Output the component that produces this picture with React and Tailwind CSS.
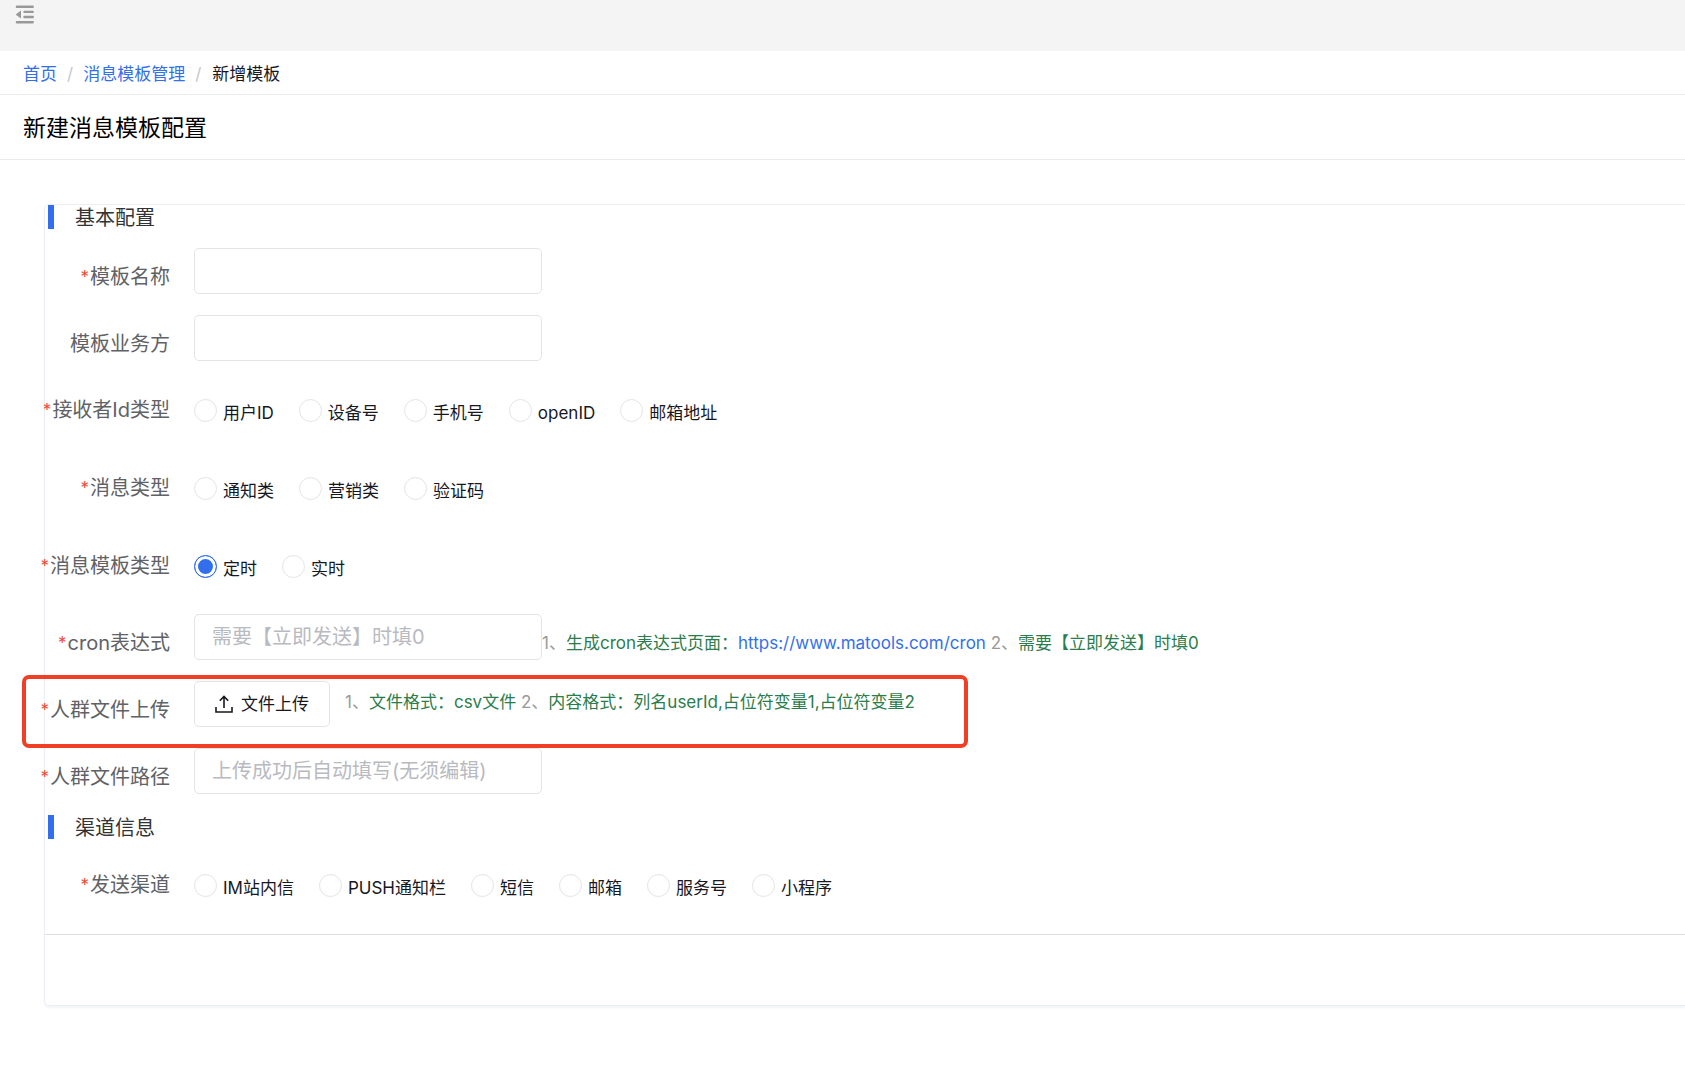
import { useState } from 'react';

const idTypes = ['用户ID', '设备号', '手机号', 'openID', '邮箱地址'];
const msgTypes = ['通知类', '营销类', '验证码'];
const templateTypes = ['定时', '实时'];
const channels = ['IM站内信', 'PUSH通知栏', '短信', '邮箱', '服务号', '小程序'];

function FoldIcon() {
  return (
    <svg width="20" height="20" viewBox="0 0 20 20" fill="#999999">
      <rect x="0.8" y="0.6" width="18" height="2.4" rx="0.8" />
      <rect x="8.4" y="5.7" width="10.4" height="2.4" rx="0.8" />
      <rect x="8.4" y="10.8" width="10.4" height="2.4" rx="0.8" />
      <rect x="0.8" y="16" width="18" height="2.4" rx="0.8" />
      <path d="M0.6 9.5 6 5.6v7.8z" />
    </svg>
  );
}

function UploadIcon() {
  return (
    <svg
      width="18"
      height="18"
      viewBox="0 0 18 18"
      fill="none"
      stroke="currentColor"
      strokeWidth="1.6"
    >
      <path d="M9 13V1.5M4.8 5.7 9 1.5l4.2 4.2M1 12v5h16v-5" />
    </svg>
  );
}

function SectionTitle({ children }) {
  return (
    <div className="ml-[3px] flex h-6 items-center gap-[21px]">
      <span className="h-full w-1.5 bg-[#326fed]" />
      <h2 className="pt-0.5 text-[20px] leading-6 text-[#333333]">{children}</h2>
    </div>
  );
}

function Label({ htmlFor, id, required, children }) {
  const Tag = htmlFor ? 'label' : 'span';
  return (
    <Tag
      htmlFor={htmlFor}
      id={id}
      className="mr-6 flex w-[125px] shrink-0 justify-end whitespace-nowrap text-[20px] leading-6 text-[#606266]"
    >
      {required && <span className="mr-px text-[17px] text-[#f5483b]">*</span>}
      {children}
    </Tag>
  );
}

function TextRow({ id, label, required, placeholder, children }) {
  return (
    <div className="mb-[21px] flex h-[46px] items-center">
      <div className="pt-3">
        <Label htmlFor={id} required={required}>
          {label}
        </Label>
      </div>
      <input
        id={id}
        type="text"
        placeholder={placeholder}
        className="h-full w-[348px] shrink-0 rounded-[5px] border border-[#e4e4e6] bg-white px-[17px] text-[20px] text-[#333333] outline-none placeholder:text-[#b8bac0]"
      />
      {children}
    </div>
  );
}

function RadioRow({ name, label, options, initial }) {
  const [value, setValue] = useState(initial);
  return (
    <div className="flex h-[78px] items-center" role="radiogroup" aria-labelledby={name}>
      <Label id={name} required>
        {label}
      </Label>
      <div className="flex gap-[25px]">
        {options.map((option) => (
          <label
            key={option}
            className="flex cursor-pointer items-center gap-1.5 whitespace-nowrap text-[17px] leading-6 text-[#17181f]"
          >
            <input
              type="radio"
              name={name}
              value={option}
              checked={value === option}
              onChange={() => setValue(option)}
              className="m-0 size-[23px] shrink-0 appearance-none rounded-full border border-[#e4e4e6] bg-white checked:border-[#326fed] checked:bg-[#326fed] checked:shadow-[inset_0_0_0_3px_white]"
            />
            <span className="-mb-1 pt-0.5">{option}</span>
          </label>
        ))}
      </div>
    </div>
  );
}

function Hint({ children }) {
  return (
    <p className="whitespace-nowrap text-[17px] leading-6 text-[#2b7d4b]">{children}</p>
  );
}

function Num({ children }) {
  return <span className="text-[#999999]">{children}</span>;
}

export default function App() {
  return (
    <div className="min-h-screen overflow-hidden bg-white font-[Inter,'Noto_Sans_CJK_SC',sans-serif]">
      <header className="h-[51px] bg-[#f4f4f4] px-[15px] pt-[5px]">
        <button type="button" aria-label="收起菜单" className="block">
          <FoldIcon />
        </button>
      </header>

      <nav className="flex h-11 items-center border-b border-[#e8eaec] px-[23px] pt-0.5 text-[17px] leading-6">
        <a href="#home" className="text-[#326fed]">
          首页
        </a>
        <span className="px-2.5 text-[#c5c8ce]">/</span>
        <a href="#templates" className="text-[#326fed]">
          消息模板管理
        </a>
        <span className="px-2.5 text-[#c5c8ce]">/</span>
        <span className="pl-px text-[#17181f]">新增模板</span>
      </nav>

      <div className="flex h-[65px] items-center border-b border-[#e8eaec] px-[23px] pt-0.5">
        <h1 className="text-[23px] leading-8 text-black">新建消息模板配置</h1>
      </div>

      <main className="pl-11 pt-11">
        <form
          onSubmit={(e) => e.preventDefault()}
          className="rounded-l-[5px] border-y border-l border-[#ebeef5] shadow-[0_2px_2px_#f3f4f8]"
        >
          <SectionTitle>基本配置</SectionTitle>

          <div className="pt-[19px]">
            <TextRow id="name" label="模板名称" required />
            <TextRow id="owner" label="模板业务方" />
          </div>

          <div className="-mt-[11px] mb-[9px]">
            <RadioRow name="idType" label="接收者Id类型" options={idTypes} />
            <RadioRow name="msgType" label="消息类型" options={msgTypes} />
            <RadioRow
              name="templateType"
              label="消息模板类型"
              options={templateTypes}
              initial="定时"
            />
          </div>

          <TextRow id="cron" label="cron表达式" required placeholder="需要【立即发送】时填0">
            <div className="pt-3">
              <Hint>
                <Num>1、</Num>生成cron表达式页面：
                <a href="https://www.matools.com/cron" className="text-[#326fed]">
                  https://www.matools.com/cron
                </a>{' '}
                <Num>2、</Num>需要【立即发送】时填0
              </Hint>
            </div>
          </TextRow>

          <div className="relative mb-[21px] flex h-[46px] items-center">
            <div className="pt-3">
              <Label id="upload" required>
                人群文件上传
              </Label>
            </div>
            <button
              type="button"
              className="flex h-full items-center gap-2 rounded-[5px] border border-[#e4e4e6] bg-white px-5 text-[17px] text-[#17181f]"
            >
              <UploadIcon />
              <span className="pt-0.5">文件上传</span>
            </button>
            <div className="pb-1 pl-[15px]">
              <Hint>
                <Num>1、</Num>文件格式：csv文件 <Num>2、</Num>
                内容格式：列名userId,占位符变量1,占位符变量2
              </Hint>
            </div>
            <div className="pointer-events-none absolute -left-[23px] -top-1.5 h-[73px] w-[946px] rounded-[7px] border-4 border-[#f13f26]" />
          </div>

          <TextRow
            id="path"
            label="人群文件路径"
            required
            placeholder="上传成功后自动填写(无须编辑)"
          />

          <SectionTitle>渠道信息</SectionTitle>

          <div className="mt-[7px] border-b border-[#dcdee2] pb-2.5">
            <RadioRow name="channel" label="发送渠道" options={channels} />
          </div>
          <div className="h-[70px]" />
        </form>
      </main>
    </div>
  );
}
